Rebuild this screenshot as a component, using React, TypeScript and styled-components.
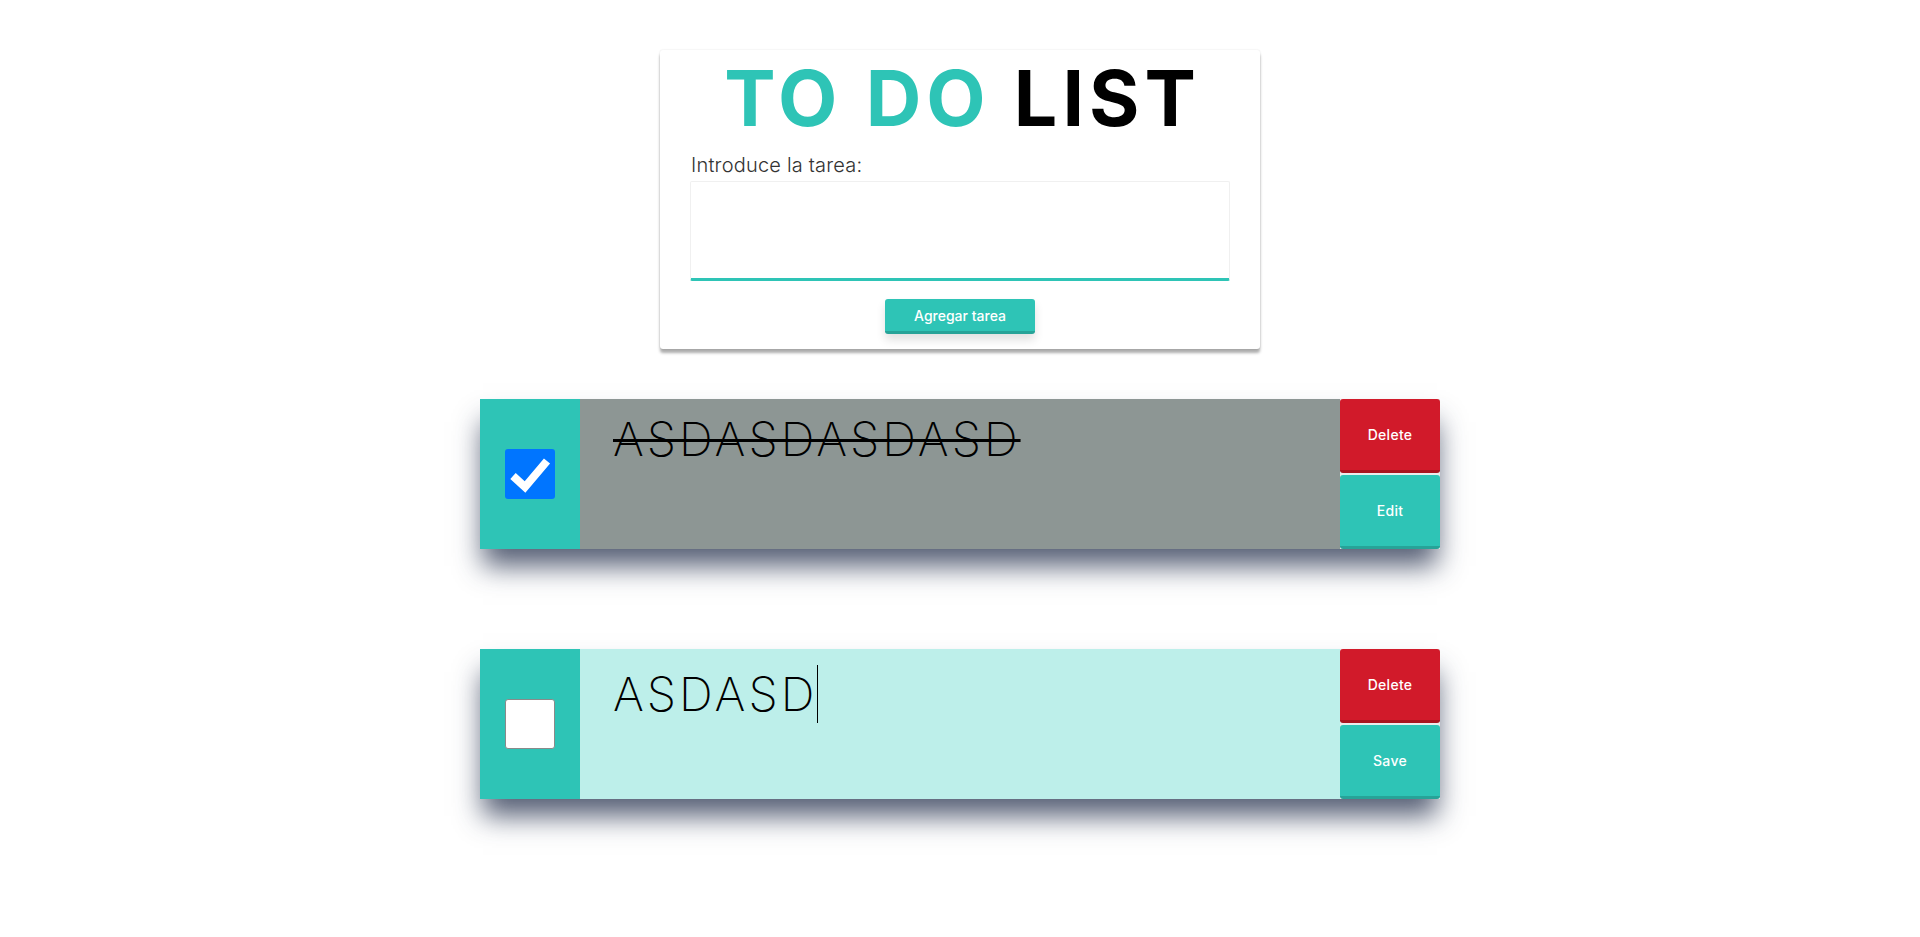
import React from "react";
import styled, { createGlobalStyle } from "styled-components";

const teal = "#2ec4b6";
const tealDark = "#27a398";
const red = "#d11a2a";
const redDark = "#a8141f";

const GlobalStyle = createGlobalStyle`
  html, body { margin: 0; padding: 0; background: #ffffff; }
  body { font-family: Inter, "Noto Sans", sans-serif; color: #000; }
  * { box-sizing: border-box; }
`;

const Page = styled.div`
  display: flex;
  flex-direction: column;
  align-items: center;
  padding-top: 50px;
  padding-bottom: 137px;
  min-height: 100vh;
`;

const Card = styled.section`
  width: 600px;
  background: #fff;
  border-radius: 3px;
  box-shadow: 0 4px 3px rgba(0, 0, 0, 0.32), 0 0 2px rgba(0, 0, 0, 0.12);
  padding: 10px 30px 15px;
  display: flex;
  flex-direction: column;
`;

const Title = styled.h1`
  margin: 0;
  font-family: Inter, "Noto Sans", sans-serif;
  font-weight: 700;
  font-size: 77px;
  line-height: 77px;
  text-align: center;
  letter-spacing: 5px;
  padding-left: 5px;
  color: #000;
`;

const Accent = styled.span`
  color: ${teal};
`;

const Label = styled.label`
  margin-top: 16px;
  font-size: 20px;
  line-height: 24px;
  font-weight: 300;
  letter-spacing: 0.2px;
  color: #333;
  padding-left: 1px;
`;

const TaskInput = styled.textarea`
  margin-top: 4px;
  width: 540px;
  height: 100px;
  border: 1px solid #f0f0f0;
  border-bottom: 3px solid ${teal};
  border-radius: 2px;
  resize: none;
  outline: none;
  font-family: inherit;
  font-size: 20px;
  background: #fff;
`;

const AddButton = styled.button`
  align-self: center;
  margin-top: 18px;
  width: 150px;
  height: 35px;
  border: none;
  border-bottom: 3px solid ${tealDark};
  border-radius: 3px;
  background: ${teal};
  color: #fff;
  font-family: Inter, "Noto Sans", sans-serif;
  font-weight: 500;
  font-size: 14px;
  box-shadow: 0 6px 10px rgba(0, 0, 0, 0.12);
  cursor: pointer;
`;

const List = styled.div`
  margin-top: 50px;
  display: flex;
  flex-direction: column;
  gap: 100px;
`;

const Row = styled.div`
  width: 960px;
  height: 150px;
  display: flex;
  box-shadow: 0 20px 26px -3px rgba(38, 50, 78, 0.78);
`;

const CheckCell = styled.div`
  width: 100px;
  background: ${teal};
  display: flex;
  align-items: center;
  justify-content: center;
`;

const Box = styled.span<{ $checked: boolean }>`
  width: 50px;
  height: 50px;
  border-radius: 3px;
  display: flex;
  align-items: center;
  justify-content: center;
  background: ${(p) => (p.$checked ? "#0075ff" : "#ffffff")};
  border: ${(p) => (p.$checked ? "none" : "1px solid #8a8a8a")};
`;

const TextCell = styled.div<{ $editing: boolean }>`
  flex: 1;
  background: ${(p) => (p.$editing ? "#bdefea" : "#8d9694")};
  padding: 16px 33px;
`;

const TaskText = styled.span<{ $done: boolean }>`
  font-size: 47px;
  line-height: 47px;
  font-weight: ${(p) => (p.$done ? 200 : 250)};
  letter-spacing: 3px;
  color: #000;
  text-decoration: ${(p) => (p.$done ? "line-through" : "none")};
  text-decoration-thickness: 3px;
`;

const Caret = styled.span`
  display: inline-block;
  width: 1px;
  height: 58px;
  background: #000;
  vertical-align: -12px;
  margin-left: 0px;
`;

const Actions = styled.div`
  width: 100px;
  display: flex;
  flex-direction: column;
  gap: 2px;
  background: #e9ecec;
`;

const ActionButton = styled.button<{ $variant: "danger" | "primary" }>`
  flex: 1;
  border: none;
  border-radius: 3px;
  border-bottom: 3px solid ${(p) => (p.$variant === "danger" ? redDark : tealDark)};
  background: ${(p) => (p.$variant === "danger" ? red : teal)};
  color: #fff;
  font-family: Inter, "Noto Sans", sans-serif;
  font-weight: 500;
  font-size: 14px;
  letter-spacing: 0.3px;
  cursor: pointer;
  padding: 0;
`;

const CheckMark = () => (
  <svg width="50" height="50" viewBox="0 0 50 50">
    <path d="M8 27 L20 38 L42 12" fill="none" stroke="#fff" strokeWidth="8" strokeLinejoin="miter" />
  </svg>
);

type Todo = { id: number; text: string; done: boolean; editing: boolean };

const todos: Todo[] = [
  { id: 1, text: "ASDASDASDASD", done: true, editing: false },
  { id: 2, text: "ASDASD", done: false, editing: true },
];

export default function App() {
  return (
    <>
      <GlobalStyle />
      <Page>
        <Card>
          <Title>
            <Accent>TO DO</Accent> LIST
          </Title>
          <Label htmlFor="task">Introduce la tarea:</Label>
          <TaskInput id="task" />
          <AddButton>Agregar tarea</AddButton>
        </Card>
        <List>
          {todos.map((t) => (
            <Row key={t.id}>
              <CheckCell>
                <Box $checked={t.done}>{t.done && <CheckMark />}</Box>
              </CheckCell>
              <TextCell $editing={t.editing}>
                <TaskText $done={t.done}>{t.text}</TaskText>
                {t.editing && <Caret />}
              </TextCell>
              <Actions>
                <ActionButton $variant="danger">Delete</ActionButton>
                <ActionButton $variant="primary">{t.editing ? "Save" : "Edit"}</ActionButton>
              </Actions>
            </Row>
          ))}
        </List>
      </Page>
    </>
  );
}
